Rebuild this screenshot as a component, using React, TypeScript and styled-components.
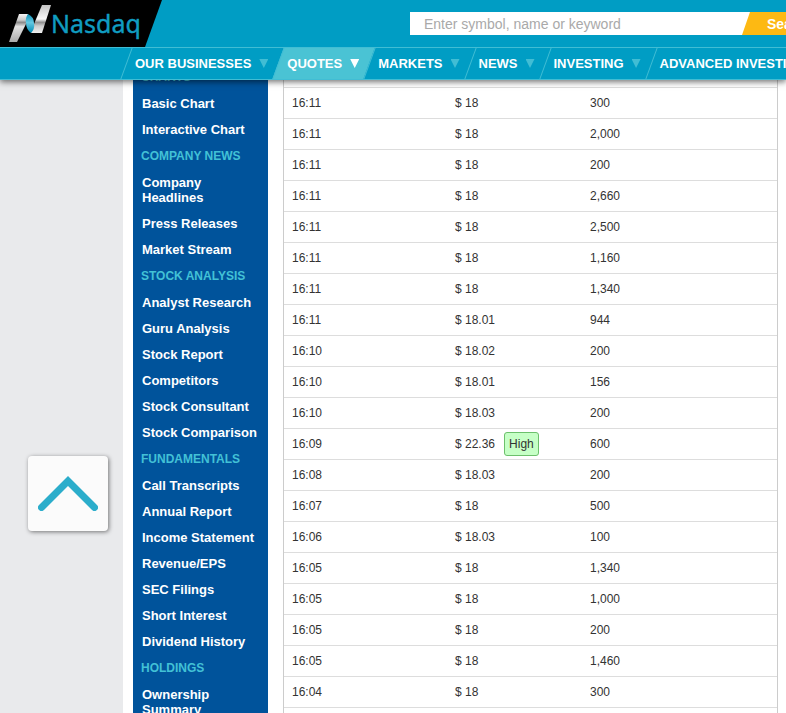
import React from "react";
import styled, { createGlobalStyle, css } from "styled-components";

const colors = {
  teal: "#009dc4",
  tealLight: "#4ac3d4",
  line: "#41bdd4",
  navy: "#00539b",
  heading: "#42c1d6",
  amber: "#fdb913",
  gutter: "#e9eaec",
  rule: "#dddddd",
};

const GlobalStyle = createGlobalStyle`
  *, *::before, *::after { box-sizing: border-box; }
  body {
    margin: 0;
    background: ${colors.gutter};
    font-family: "Liberation Sans", Arial, sans-serif;
    color: #333;
  }
`;

const Page = styled.div`
  height: 100vh;
  overflow: hidden;
`;

const Header = styled.header`
  position: fixed;
  top: 0;
  left: 0;
  right: 0;
  z-index: 2;
  overflow: hidden;
  background: ${colors.teal};
`;

const HeaderShadow = styled.div`
  position: fixed;
  top: 0;
  left: 0;
  right: 0;
  height: 80px;
  z-index: 1;
  box-shadow: 0 2px 6px rgba(0, 0, 0, 0.55);
`;

const TopBar = styled.div`
  display: flex;
  align-items: center;
  justify-content: space-between;
  height: 47px;
`;

const LogoLink = styled.a`
  display: block;
  flex: none;
  height: 47px;
`;

const SearchForm = styled.form`
  display: flex;
  flex: none;
  height: 23px;
  margin-right: -48px;
`;

const SearchInput = styled.input`
  width: 344px;
  padding: 0 14px;
  border: 0;
  border-radius: 0;
  background: #fff;
  font: 14px "Liberation Sans", Arial, sans-serif;
  outline: none;
  &::placeholder {
    color: #a9a9a9;
    opacity: 1;
  }
`;

const SearchButton = styled.button`
  width: 92px;
  margin-left: -12px;
  padding: 0 0 0 25px;
  border: 0;
  background: ${colors.amber};
  clip-path: polygon(8px 0, 100% 0, 100% 100%, 0 100%);
  color: #fff;
  font: bold 14px "Liberation Sans", Arial, sans-serif;
  text-align: left;
  cursor: pointer;
`;

const Nav = styled.nav`
  display: flex;
  height: 33px;
  padding-left: 126px;
  border-top: 1px solid ${colors.line};
  border-bottom: 1px solid ${colors.line};
`;

const NavLink = styled.a<{ $active?: boolean }>`
  position: relative;
  display: flex;
  flex: none;
  align-items: center;
  gap: 8px;
  padding: 0 10px 0 9px;
  color: #fff;
  font-size: 13px;
  font-weight: bold;
  text-decoration: none;
  white-space: nowrap;
  &::before {
    content: "";
    position: absolute;
    inset: 0;
    z-index: -1;
    transform: skewX(-20deg);
    border-left: 1px solid ${colors.line};
    ${(p) => p.$active && css`background: ${colors.tealLight};`}
  }
`;

const Caret = styled.span<{ $active?: boolean }>`
  width: 9px;
  height: 9px;
  background: ${(p) => (p.$active ? "#fff" : colors.line)};
  clip-path: polygon(0 0, 100% 0, 50% 100%);
`;

const Body = styled.div`
  display: flex;
  align-items: flex-start;
  gap: 15px;
  min-height: 100vh;
  margin-left: 123px;
  padding: 57px 8px 0 10px;
  background: #fff;
`;

const Sidebar = styled.nav`
  flex: none;
  width: 135px;
  padding-top: 7px;
  background: ${colors.navy};
`;

const SideHeading = styled.h3`
  margin: 0;
  padding: 6px 8px;
  color: ${colors.heading};
  font-size: 12px;
  line-height: 15px;
`;

const SideList = styled.ul`
  margin: 0;
  padding: 0;
  list-style: none;
`;

const SideLink = styled.a`
  display: block;
  padding: 5px 9px 6px;
  color: #fff;
  font-size: 13px;
  font-weight: bold;
  line-height: 15px;
  text-decoration: none;
`;

const TradesPane = styled.main`
  flex: 1;
  min-width: 0;
`;

const Trades = styled.table`
  width: 100%;
  table-layout: fixed;
  border-collapse: separate;
  border-spacing: 0;
  border-left: 1px solid #ccc;
  border-right: 1px solid #ccc;
  font-size: 12px;
  line-height: 14px;
`;

const Column = styled.col<{ $width?: number }>`
  width: ${(p) => (p.$width ? `${p.$width}px` : "auto")};
`;

const Cell = styled.td`
  height: 31px;
  padding: 0 8px;
  border-bottom: 1px solid ${colors.rule};
  vertical-align: middle;
`;

const Tag = styled.span`
  display: inline-block;
  margin: -5px 0 -5px 9px;
  padding: 4px;
  border: 1px solid #6cc06c;
  border-radius: 3px;
  background: #c6ffc6;
`;

const BackToTop = styled.button`
  position: fixed;
  left: 28px;
  bottom: 182px;
  z-index: 1;
  display: grid;
  place-items: center;
  padding: 20px 10px;
  border: 0;
  border-radius: 4px;
  background: #fbfbfb;
  box-shadow: 1px 1px 4px rgba(0, 0, 0, 0.5);
  cursor: pointer;
`;

function Logo() {
  return (
    <svg width="162" height="47" viewBox="0 0 162 47" role="img" aria-label="Nasdaq">
      <defs>
        <linearGradient id="left" x1="0" y1="0" x2="0" y2="1">
          <stop offset="0" stopColor="#f4f4f4" />
          <stop offset="0.22" stopColor="#c9c9c9" />
          <stop offset="0.3" stopColor="#8a8a8a" />
          <stop offset="0.45" stopColor="#e2e2e2" />
          <stop offset="1" stopColor="#a9a9a9" />
        </linearGradient>
        <linearGradient id="right" x1="0" y1="0" x2="0" y2="1">
          <stop offset="0" stopColor="#c4c4c4" />
          <stop offset="0.5" stopColor="#f8f8f8" />
          <stop offset="0.62" stopColor="#8f8f8f" />
          <stop offset="0.75" stopColor="#cccccc" />
          <stop offset="1" stopColor="#f0f0f0" />
        </linearGradient>
        <linearGradient id="fold" x1="0" y1="0" x2="0" y2="1">
          <stop offset="0" stopColor="#0f8fb5" />
          <stop offset="0.45" stopColor="#63c8e2" />
          <stop offset="1" stopColor="#0089b2" />
        </linearGradient>
      </defs>
      <path d="M0 0H162L145 47H0Z" fill="#000" />
      <path d="M19 14H28L26 24L17 42H9Z" fill="url(#left)" />
      <path d="M42 5H51L42 33H31L34 24Z" fill="url(#right)" />
      <path d="M28 14Q34 17 34 23Q35 29 31 33Q26 29 26 23Q25 18 28 14Z" fill="url(#fold)" />
      <text
        x="51"
        y="33"
        fill="#109dc1"
        stroke="#109dc1"
        strokeWidth="0.4"
        fontFamily="'Noto Sans', 'Open Sans', sans-serif"
        fontSize="25"
      >
        Nasdaq
      </text>
    </svg>
  );
}

const navItems = [
  { label: "OUR BUSINESSES" },
  { label: "QUOTES", active: true },
  { label: "MARKETS" },
  { label: "NEWS" },
  { label: "INVESTING" },
  { label: "ADVANCED INVESTING" },
];

const sections = [
  { title: "CHARTS", links: ["Basic Chart", "Interactive Chart"] },
  { title: "COMPANY NEWS", links: ["Company Headlines", "Press Releases", "Market Stream"] },
  {
    title: "STOCK ANALYSIS",
    links: [
      "Analyst Research",
      "Guru Analysis",
      "Stock Report",
      "Competitors",
      "Stock Consultant",
      "Stock Comparison",
    ],
  },
  {
    title: "FUNDAMENTALS",
    links: [
      "Call Transcripts",
      "Annual Report",
      "Income Statement",
      "Revenue/EPS",
      "SEC Filings",
      "Short Interest",
      "Dividend History",
    ],
  },
  { title: "HOLDINGS", links: ["Ownership Summary"] },
];

const trades: [string, string, string, string?][] = [
  ["", "", ""],
  ["16:11", "18", "300"],
  ["16:11", "18", "2,000"],
  ["16:11", "18", "200"],
  ["16:11", "18", "2,660"],
  ["16:11", "18", "2,500"],
  ["16:11", "18", "1,160"],
  ["16:11", "18", "1,340"],
  ["16:11", "18.01", "944"],
  ["16:10", "18.02", "200"],
  ["16:10", "18.01", "156"],
  ["16:10", "18.03", "200"],
  ["16:09", "22.36", "600", "High"],
  ["16:08", "18.03", "200"],
  ["16:07", "18", "500"],
  ["16:06", "18.03", "100"],
  ["16:05", "18", "1,340"],
  ["16:05", "18", "1,000"],
  ["16:05", "18", "200"],
  ["16:05", "18", "1,460"],
  ["16:04", "18", "300"],
  ["", "", ""],
];

export default function App() {
  return (
    <Page>
      <GlobalStyle />
      <HeaderShadow />
      <Header>
        <TopBar>
          <LogoLink href="#">
            <Logo />
          </LogoLink>
          <SearchForm role="search">
            <SearchInput
              type="text"
              aria-label="Enter symbol, name or keyword"
              placeholder="Enter symbol, name or keyword"
            />
            <SearchButton type="button">Search</SearchButton>
          </SearchForm>
        </TopBar>
        <Nav aria-label="Main">
          {navItems.map((item) => (
            <NavLink key={item.label} href="#" $active={item.active}>
              {item.label}
              <Caret $active={item.active} />
            </NavLink>
          ))}
        </Nav>
      </Header>
      <Body>
        <Sidebar aria-label="Quote pages">
          {sections.map((section) => (
            <section key={section.title}>
              <SideHeading>{section.title}</SideHeading>
              <SideList>
                {section.links.map((link) => (
                  <li key={link}>
                    <SideLink href="#">{link}</SideLink>
                  </li>
                ))}
              </SideList>
            </section>
          ))}
        </Sidebar>
        <TradesPane>
          <Trades>
            <colgroup>
              <Column $width={163} />
              <Column $width={135} />
              <Column />
            </colgroup>
            <tbody>
              {trades.map(([time, price, volume, tag], i) => (
                <tr key={i}>
                  <Cell>{time}</Cell>
                  <Cell>
                    {price && `$ ${price}`}
                    {tag && <Tag>{tag}</Tag>}
                  </Cell>
                  <Cell>{volume}</Cell>
                </tr>
              ))}
            </tbody>
          </Trades>
        </TradesPane>
      </Body>
      <BackToTop type="button" aria-label="Back to top">
        <svg width="60" height="35" viewBox="0 0 60 35" fill="none" aria-hidden="true">
          <path d="M3.500 31.500L30 5L56.500 31.500" stroke="#2badcb" strokeWidth="7" strokeLinecap="round" />
        </svg>
      </BackToTop>
    </Page>
  );
}
